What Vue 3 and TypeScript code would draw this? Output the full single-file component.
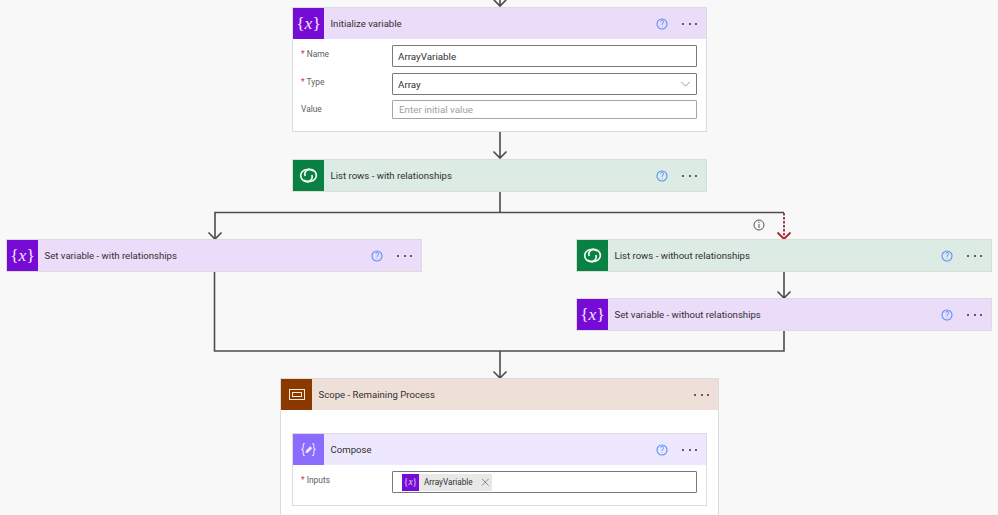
<template>
  <div class="canvas">
    <!-- connectors between the flow steps -->
    <svg class="wires" width="998" height="515" viewBox="0 0 998 515" fill="none">
      <g stroke="#4c4c4c" stroke-width="1.6">
        <path d="M500 0V6M493.500 -0.500L500 6L506.500 -0.500" />
        <path d="M500 132V158M493.500 151.500L500 158L506.500 151.500" />
        <path d="M500 191V212.500M215 239V212.500H784" />
        <path d="M208.500 232.500L215 239L221.500 232.500" />
        <path d="M784 271V298M777.500 291.500L784 298L790.500 291.500" />
        <path d="M214.500 271V351H784V331M500 351V378M493.500 371.500L500 378L506.500 371.500" />
      </g>
      <path d="M784 213V238" stroke="#a4262c" stroke-width="1.8" stroke-dasharray="2.500 1.500" />
      <path d="M777.500 232.500L784 239L790.500 232.500" stroke="#a4262c" stroke-width="1.800" />
      <circle cx="759" cy="225" r="5" stroke="#555" stroke-width="1" />
      <path d="M759 224V228M759 221.700V222.900" stroke="#555" stroke-width="1" />
    </svg>

    <div class="node" :style="place(292, 7, 415)">
      <header class="head variable">
        <span class="tile tile-variable"><i class="brace">{<em>x</em>}</i></span>
        <span class="title">Initialize variable</span>
        <svg class="help" viewBox="0 0 12 12"><circle cx="6" cy="6" r="5" /><text x="6" y="8.700">?</text></svg>
        <span class="dots"><b></b><b></b><b></b></span>
      </header>
      <div class="body">
        <div class="row">
          <label><span class="req">*</span> Name</label>
          <div class="field">ArrayVariable</div>
        </div>
        <div class="row">
          <label><span class="req">*</span> Type</label>
          <div class="field">Array
            <svg class="chevron" viewBox="0 0 12 7" fill="none"><path d="M1 1l5 5 5-5" /></svg>
          </div>
        </div>
        <div class="row row-last">
          <label>Value</label>
          <div class="field field-empty">Enter initial value</div>
        </div>
      </div>
    </div>

    <div v-for="step in steps" :key="step.title" class="node" :style="place(step.x, step.y, step.w)">
      <header class="head" :class="step.kind">
        <span class="tile" :class="'tile-' + step.kind">
          <i v-if="step.kind === 'variable'" class="brace">{<em>x</em>}</i>
          <svg v-else class="logo" viewBox="0 0 20 16" fill="none">
            <path d="M15 3C10 0 3 1.500 1.800 7C1 11.500 5 15 9.500 14.500C13 14 14.800 10.500 13.500 7.500" />
            <path d="M5 13C10 16 17 14.500 18.200 9C19 4.500 15 1 10.500 1.500C7 2 5.200 5.500 6.500 8.500" />
          </svg>
        </span>
        <span class="title">{{ step.title }}</span>
        <svg class="help" viewBox="0 0 12 12"><circle cx="6" cy="6" r="5" /><text x="6" y="8.700">?</text></svg>
        <span class="dots"><b></b><b></b><b></b></span>
      </header>
    </div>

    <div class="node scope-node" :style="place(280, 378, 439)">
      <header class="head scope">
        <span class="tile tile-scope">
          <svg class="frame" viewBox="0 0 16 11" fill="none">
            <rect x="0.500" y="0.500" width="15" height="10" />
            <rect x="3.500" y="3.500" width="9" height="4" />
          </svg>
        </span>
        <span class="title">Scope - Remaining Process</span>
        <span class="dots"><b></b><b></b><b></b></span>
      </header>
      <div class="scope-body">
        <div class="node-inner">
          <header class="head compose">
            <span class="tile tile-compose">
              <svg class="compose-icon" viewBox="0 0 20 16" fill="none">
                <path d="M6 1.500C3.800 1.500 4.500 4 4.300 6C4.200 7.300 3.500 7.800 2.500 8C3.500 8.200 4.200 8.700 4.300 10C4.500 12 3.800 14.500 6 14.500" />
                <path d="M14 1.500C16.200 1.500 15.500 4 15.700 6C15.800 7.300 16.500 7.800 17.500 8C16.500 8.200 15.800 8.700 15.700 10C15.500 12 16.200 14.500 14 14.500" />
                <path class="pencil" d="M6.800 12L7.400 9L11.800 4.400L14 6.600L9.600 11.200Z" />
              </svg>
            </span>
            <span class="title">Compose</span>
            <svg class="help" viewBox="0 0 12 12"><circle cx="6" cy="6" r="5" /><text x="6" y="8.700">?</text></svg>
            <span class="dots"><b></b><b></b><b></b></span>
          </header>
          <div class="body compose-body">
            <div class="row">
              <label><span class="req">*</span> Inputs</label>
              <div class="field field-token">
                <span class="token">
                  <span class="token-icon">{<em>x</em>}</span>
                  <span class="token-name">ArrayVariable</span>
                  <svg class="token-x" viewBox="0 0 10 10" fill="none"><path d="M1 1l8 8M9 1l-8 8" /></svg>
                </span>
              </div>
            </div>
          </div>
        </div>
      </div>
    </div>
  </div>
</template>

<script setup lang="ts">
interface Step {
  title: string
  kind: "variable" | "dataverse"
  x: number
  y: number
  w: number
}

const steps: Step[] = [
  { title: "List rows - with relationships", kind: "dataverse", x: 292, y: 159, w: 415 },
  { title: "Set variable - with relationships", kind: "variable", x: 6, y: 239, w: 416 },
  { title: "List rows - without relationships", kind: "dataverse", x: 576, y: 239, w: 416 },
  { title: "Set variable - without relationships", kind: "variable", x: 576, y: 298, w: 416 },
]

// nodes sit on a free canvas, so their place is data
const place = (x: number, y: number, width: number) => ({
  left: x + "px",
  top: y + "px",
  width: width + "px",
})
</script>

<style>
html,
body {
  margin: 0;
  background: #f8f8f8;
}
</style>

<style scoped>
.canvas {
  position: relative;
  width: 998px;
  height: 515px;
  overflow: hidden;
  background: #f8f8f8;
  font-family: Roboto, "Liberation Sans", sans-serif;
  font-size: 10px;
  color: #323130;
}

.wires {
  position: absolute;
  left: 0;
  top: 0;
}

.node {
  position: absolute;
  box-sizing: border-box;
  background: #fff;
  border: 1px solid #dcdcdc;
}

.scope-node {
  height: 160px;
}

.head {
  display: flex;
  align-items: center;
  height: 31px;
}

.variable { background: #ebdcfa; }
.dataverse { background: #dcebe3; }
.scope { background: #eee0d9; }
.compose { background: #ede8fe; }

.tile {
  display: flex;
  align-items: center;
  justify-content: center;
  flex: none;
  width: 31px;
  height: 31px;
  margin-right: 6.500px;
  color: #f3eafc;
}

.tile-variable { background: #770bd6; }
.tile-dataverse { background: #088142; }
.tile-scope { background: #8c3900; }
.tile-compose { background: #8c6cff; }

.brace {
  font-family: "Liberation Serif", serif;
  font-style: normal;
  font-size: 17.500px;
}

.brace em {
  font-size: 17.500px;
}

.logo {
  width: 19px;
  height: 15px;
  stroke: #f4faf6;
  stroke-width: 1.800;
}

.frame {
  width: 16px;
  height: 11px;
  stroke: #f6e6dc;
  stroke-width: 1;
}

.compose-icon {
  width: 19px;
  height: 15px;
  stroke: #efeaff;
  stroke-width: 1.100;
}

.compose-icon .pencil {
  fill: #efeaff;
  stroke: none;
}

.title {
  flex: 1;
  font-size: 9.600px;
  white-space: nowrap;
}

.help {
  flex: none;
  width: 12px;
  height: 12px;
  margin-right: 14.500px;
}

.help circle {
  fill: none;
  stroke: #5b8ff9;
  stroke-width: 1.100;
}

.help text {
  fill: #5b8ff9;
  font-size: 8.500px;
  text-anchor: middle;
}

.dots {
  display: flex;
  gap: 4.500px;
  flex: none;
  margin-right: 9px;
}

.dots b {
  width: 2px;
  height: 2px;
  border-radius: 50%;
  background: #323130;
}

.body {
  display: flex;
  flex-direction: column;
  gap: 6px;
  padding: 6px 9px 12px 8px;
}

.row {
  display: grid;
  grid-template-columns: 91px 1fr;
}

.row label {
  padding-top: 4px;
  font-size: 8.400px;
  color: #605e5c;
}

.req {
  color: #d13438;
}

.field {
  display: flex;
  align-items: center;
  justify-content: space-between;
  box-sizing: border-box;
  height: 22px;
  padding: 0 5px;
  background: #fff;
  border: 1px solid #7a7978;
  border-radius: 1px;
  font-size: 9.800px;
}

.chevron {
  width: 11px;
  height: 6px;
  stroke: #8a8886;
  stroke-width: 1;
}

.row-last {
  margin-top: -1px;
}

.field-empty {
  height: 19px;
  padding-left: 6px;
  border-color: #a8a6a4;
  color: #a19f9d;
}

.scope-body {
  padding: 23px 11px;
}

.node-inner {
  background: #fff;
  border: 1px solid #dcdcdc;
}

.compose-body {
  padding-top: 6px;
  padding-bottom: 12px;
}

.field-token {
  justify-content: flex-start;
  padding: 0 9px;
}

.token {
  display: flex;
  align-items: center;
  height: 17px;
  background: #e8e8e8;
}

.token-icon {
  display: flex;
  align-items: center;
  justify-content: center;
  width: 17px;
  height: 17px;
  background: #770bd6;
  color: #e8d8fa;
  font-family: "Liberation Serif", serif;
  font-size: 9.500px;
}

.token-name {
  margin: 0 8px 0 5px;
  font-size: 8.200px;
}

.token-x {
  width: 8.500px;
  height: 8.500px;
  margin-right: 2.500px;
  stroke: #605e5c;
  stroke-width: 0.800;
}
</style>
